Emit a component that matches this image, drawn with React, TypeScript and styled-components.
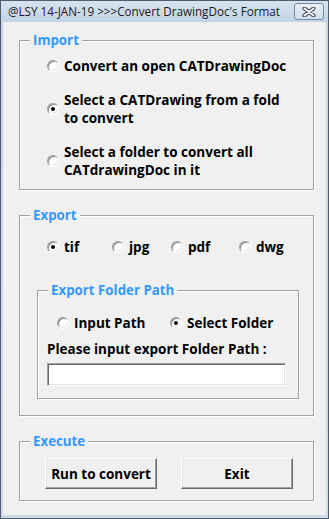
import styled, { createGlobalStyle } from 'styled-components';

const GlobalStyle = createGlobalStyle`
  html, body {
    margin: 0;
    padding: 0;
    background: #ffffff;
  }
  body {
    font-family: 'Open Sans', 'Liberation Sans', sans-serif;
  }
`;

const Window = styled.div`
  width: 329px;
  height: 519px;
  box-sizing: border-box;
  border: 1px solid #4f5d6e;
  padding: 0 2px 3px 2px;
  background: linear-gradient(#d7e2ef, #c4d4e6 21px, #cddbea);
  display: flex;
  flex-direction: column;
`;

const TitleBar = styled.div`
  height: 21px;
  display: flex;
  align-items: flex-start;
  justify-content: space-between;
  padding-left: 5px;
`;

const Title = styled.span`
  font-size: 11.7px;
  line-height: 21px;
  color: #1b1b1b;
  white-space: nowrap;
`;

const CloseButton = styled.div`
  width: 30px;
  height: 17px;
  margin-top: 2px;
  margin-right: 2px;
  box-sizing: border-box;
  border: 1px solid #7b8a9c;
  border-radius: 3px;
  background: linear-gradient(#e9eff6, #d3deeb);
  display: flex;
  align-items: center;
  justify-content: center;
`;

const Client = styled.div`
  flex: 1;
  background: #f0f0f0;
  padding: 10px 0 0 16px;
`;

const Group = styled.fieldset<{ $width: number; $gap?: number }>`
  width: ${(p) => p.$width}px;
  min-width: 0;
  box-sizing: border-box;
  margin: 0 0 ${(p) => p.$gap ?? 17}px 0;
  padding: 0;
  border: 1px solid #a0a0a0;
  box-shadow: inset 1px 1px 0 #ffffff, 1px 1px 0 #ffffff;
`;

const Legend = styled.legend`
  margin-left: 10px;
  padding: 0 3px;
  font-size: 13.3px;
  font-weight: 700;
  line-height: 16px;
  color: #3399ff;
  background: #f0f0f0;
`;

const Body = styled.div<{ $pad: string }>`
  padding: ${(p) => p.$pad};
  display: flex;
  flex-direction: column;
`;

const Options = styled.div`
  display: flex;
  flex-direction: column;
  gap: 16px;
`;

const OptionRow = styled.div<{ $cols: string; $indent: number }>`
  display: grid;
  grid-template-columns: ${(p) => p.$cols};
  padding-left: ${(p) => p.$indent}px;
`;

const Option = styled.label`
  display: flex;
  align-items: center;
  gap: 5px;
  font-size: 13.5px;
  font-weight: 700;
  line-height: 18px;
  color: #000000;
  white-space: nowrap;
`;

const Radio = styled.span<{ $checked?: boolean }>`
  position: relative;
  flex: none;
  width: 12px;
  height: 12px;
  box-sizing: border-box;
  border-radius: 50%;
  border: 1px solid;
  border-color: #a0a0a0 #ffffff #ffffff #a0a0a0;
  box-shadow: inset 1px 1px 0 #8a8a8a, inset -1px -1px 0 #e3e3e3;
  background: #ffffff;

  &::after {
    content: '';
    display: ${(p) => (p.$checked ? 'block' : 'none')};
    position: absolute;
    left: 3px;
    top: 3px;
    width: 4px;
    height: 4px;
    border-radius: 50%;
    background: #000000;
  }
`;

const FieldLabel = styled.div`
  margin-top: 8px;
  font-size: 13.5px;
  font-weight: 700;
  line-height: 18px;
  color: #000000;
  white-space: nowrap;
`;

const PathInput = styled.input`
  margin-top: 5px;
  width: 239px;
  height: 23px;
  box-sizing: border-box;
  border: 1px solid;
  border-color: #a0a0a0 #ffffff #ffffff #a0a0a0;
  box-shadow: inset 1px 1px 0 #696969, inset -1px -1px 0 #e3e3e3;
  background: #ffffff;
  outline: none;
  padding: 0 3px;
  font-family: inherit;
`;

const Buttons = styled.div`
  display: flex;
  gap: 24px;
`;

const Button = styled.button`
  width: 112px;
  height: 31px;
  box-sizing: border-box;
  border: 1px solid;
  border-color: #ffffff #696969 #696969 #ffffff;
  box-shadow: inset -1px -1px 0 #a0a0a0, inset 1px 1px 0 #e3e3e3;
  background: #f0f0f0;
  padding: 0;
  font-family: inherit;
  font-size: 13.5px;
  font-weight: 700;
  color: #000000;
`;

const CloseIcon = () => (
  <svg width="14" height="10" viewBox="0 0 14 10">
    <path d="M2.5 1.5 L11.5 8.5 M11.5 1.5 L2.5 8.5" stroke="#3a4656" strokeWidth="4" strokeLinecap="round" />
    <path d="M2.5 1.5 L11.5 8.5 M11.5 1.5 L2.5 8.5" stroke="#ffffff" strokeWidth="2" strokeLinecap="round" />
  </svg>
);

const formats = ['tif', 'jpg', 'pdf', 'dwg'];

export default function App() {
  return (
    <>
      <GlobalStyle />
      <Window>
        <TitleBar>
          <Title>@LSY 14-JAN-19 &gt;&gt;&gt;Convert DrawingDoc's Format</Title>
          <CloseButton>
            <CloseIcon />
          </CloseButton>
        </TitleBar>
        <Client>
          <Group $width={295}>
            <Legend>Import</Legend>
            <Body $pad="9px 0 10px 27px">
              <Options>
                <Option>
                  <Radio />
                  Convert an open CATDrawingDoc
                </Option>
                <Option>
                  <Radio $checked />
                  <span>
                    Select a CATDrawing from a fold
                    <br />
                    to convert
                  </span>
                </Option>
                <Option>
                  <Radio />
                  <span>
                    Select a folder to convert all
                    <br />
                    CATdrawingDoc in it
                  </span>
                </Option>
              </Options>
            </Body>
          </Group>

          <Group $width={295}>
            <Legend>Export</Legend>
            <Body $pad="15px 0 16px 17px">
              <OptionRow $cols="65px 59px 68px auto" $indent={10}>
                {formats.map((f, i) => (
                  <Option key={f}>
                    <Radio $checked={i === 0} />
                    {f}
                  </Option>
                ))}
              </OptionRow>
              <Group $width={262} $gap={0} style={{ marginTop: 26 }}>
                <Legend>Export Folder Path</Legend>
                <Body $pad="16px 0 12px 9px">
                  <OptionRow $cols="113px auto" $indent={10}>
                    <Option>
                      <Radio />
                      Input Path
                    </Option>
                    <Option>
                      <Radio $checked />
                      Select Folder
                    </Option>
                  </OptionRow>
                  <FieldLabel>Please input export Folder Path :</FieldLabel>
                  <PathInput />
                </Body>
              </Group>
            </Body>
          </Group>

          <Group $width={295} $gap={0}>
            <Legend>Execute</Legend>
            <Body $pad="9px 0 11px 25px">
              <Buttons>
                <Button>Run to convert</Button>
                <Button>Exit</Button>
              </Buttons>
            </Body>
          </Group>
        </Client>
      </Window>
    </>
  );
}
